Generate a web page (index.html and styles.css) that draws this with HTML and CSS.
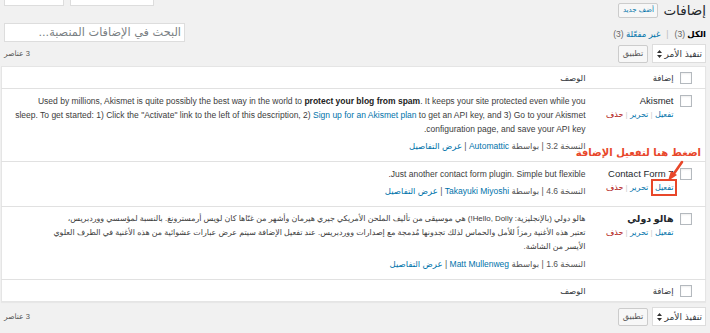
FILE: index.html
```html
<!DOCTYPE html>
<html lang="ar" dir="rtl">
<head>
<meta charset="utf-8">
<title>إضافات</title>
<link rel="stylesheet" href="styles.css">
</head>
<body>
<div class="wrap">
  <div class="head">
    <div class="title-group">
      <h1 class="page-title">إضافات</h1>
      <a class="add-new">أضف جديد</a>
    </div>
    <div class="screen-tabs">
      <span class="tab tab-a"></span>
      <span class="tab tab-b"></span>
    </div>
  </div>

  <div class="filter-row">
    <ul class="subsubsub">
      <li><b class="current">الكل</b> <span class="count">(3)</span></li>
      <li class="sep">|</li>
      <li><a>غير مفعّلة</a> <span class="count">(3)</span></li>
    </ul>
    <div class="search-box">البحث في الإضافات المنصبة...</div>
  </div>

  <div class="tablenav">
    <div class="bulk">
      <div class="select">
        <span>تنفيذ الأمر</span>
        <svg class="arrows" width="5" height="8" viewBox="0 0 5 8"><path d="M2.5 0L5 3H0z M2.5 8L0 5h5z" fill="#333"/></svg>
      </div>
      <span class="button">تطبيق</span>
    </div>
    <span class="num">3 عناصر</span>
  </div>

  <table class="plugins">
    <thead>
      <tr>
        <th class="check"><span class="cb"></span></th>
        <th class="col-name">إضافة</th>
        <th class="col-desc">الوصف</th>
      </tr>
    </thead>
    <tbody>
      <tr>
        <td class="check"><span class="cb"></span></td>
        <td class="col-name">
          <div class="plugin-title">Akismet</div>
          <div class="actions"><a>تفعيل</a> <span class="sep">|</span> <a>تحرير</a> <span class="sep">|</span> <a class="delete">حذف</a></div>
        </td>
        <td class="col-desc">
          <p class="desc">Used by millions, Akismet is quite possibly the best way in the world to <strong>protect your blog from spam</strong>. It keeps your site protected even while you<br>sleep. To get started: 1) Click the "Activate" link to the left of this description, 2) <a>Sign up for an Akismet plan</a> to get an API key, and 3) Go to your Akismet<br>configuration page, and save your API key.</p>
          <p class="meta">النسخة 3.2 | بواسطة <a>Automattic</a> | <a>عرض التفاصيل</a></p>
        </td>
      </tr>
      <tr>
        <td class="check"><span class="cb"></span></td>
        <td class="col-name">
          <div class="plugin-title">Contact Form 7</div>
          <div class="actions"><a>تفعيل</a> <span class="sep">|</span> <a>تحرير</a> <span class="sep">|</span> <a class="delete">حذف</a></div>
        </td>
        <td class="col-desc">
          <p class="desc">Just another contact form plugin. Simple but flexible.</p>
          <p class="meta">النسخة 4.6 | بواسطة <a>Takayuki Miyoshi</a> | <a>عرض التفاصيل</a></p>
        </td>
      </tr>
      <tr>
        <td class="check"><span class="cb"></span></td>
        <td class="col-name">
          <div class="plugin-title ar">هالو دولي</div>
          <div class="actions"><a>تفعيل</a> <span class="sep">|</span> <a>تحرير</a> <span class="sep">|</span> <a class="delete">حذف</a></div>
        </td>
        <td class="col-desc">
          <p class="desc ar">هالو دولي (بالإنجليزية: Hello, Dolly!) هي موسيقى من تأليف الملحن الأمريكي جيري هيرمان وأشهر من غنّاها كان لويس أرمسترونغ. بالنسبة لمؤسسي ووردبريس،<br>تعتبر هذه الأغنية رمزاً للأمل والحماس لذلك تجدونها مُدمجة مع إصدارات ووردبريس. عند تفعيل الإضافة سيتم عرض عبارات عشوائية من هذه الأغنية في الطرف العلوي<br>الأيسر من الشاشة.</p>
          <p class="meta">النسخة 1.6 | بواسطة <a>Matt Mullenweg</a> | <a>عرض التفاصيل</a></p>
        </td>
      </tr>
    </tbody>
    <tfoot>
      <tr>
        <th class="check"><span class="cb"></span></th>
        <th class="col-name">إضافة</th>
        <th class="col-desc">الوصف</th>
      </tr>
    </tfoot>
  </table>

  <div class="tablenav bottom">
    <div class="bulk">
      <div class="select">
        <span>تنفيذ الأمر</span>
        <svg class="arrows" width="5" height="8" viewBox="0 0 5 8"><path d="M2.5 0L5 3H0z M2.5 8L0 5h5z" fill="#333"/></svg>
      </div>
      <span class="button">تطبيق</span>
    </div>
    <span class="num">3 عناصر</span>
  </div>

  <div class="note">اضغط هنا لتفعيل الإضافة</div>
  <svg class="note-arrow" width="24" height="24" viewBox="0 0 24 24"><path d="M18 2 L9 15" stroke="#e8472a" stroke-width="2.6" fill="none" stroke-linecap="round"/><path d="M4 21 L7 11 L13 15 Z" fill="#e8472a"/></svg>
  <div class="note-box"></div>
</div>
</body>
</html>
```

FILE: styles.css
```css
* { box-sizing: border-box; }

html, body {
  margin: 0;
  padding: 0;
  background: #f1f1f1;
}

body {
  font-family: "Liberation Sans", "DejaVu Sans", sans-serif;
  font-size: 8.5px;
  color: #444;
}

a { color: #0073aa; text-decoration: none; }

.wrap {
  position: relative;
  padding: 0 4px 0 3px;
}

.head {
  display: flex;
  justify-content: space-between;
  align-items: flex-start;
  height: 21px;
}

.title-group {
  display: flex;
  align-items: center;
  gap: 5px;
  padding-top: 1px;
}

.page-title {
  margin: 0;
  font-size: 13.5px;
  line-height: 18px;
  font-weight: normal;
  color: #23282d;
  font-family: "DejaVu Sans", sans-serif;
}

.add-new {
  display: block;
  height: 15px;
  width: 40px;
  line-height: 13px;
  text-align: center;
  border: 1px solid #ccc;
  border-radius: 2px;
  background: #f7f7f7;
  font-size: 7px;
  font-family: "DejaVu Sans", sans-serif;
}

.screen-tabs {
  display: flex;
  direction: ltr;
  gap: 6px;
  padding-left: 1px;
}

.tab {
  display: block;
  height: 6px;
  background: #fff;
  border: 1px solid #ddd;
  border-top: none;
}
.tab-a { width: 60px; }
.tab-b { width: 84px; }

.filter-row {
  display: flex;
  justify-content: space-between;
  align-items: flex-end;
  height: 21px;
}

.subsubsub {
  display: flex;
  gap: 4px;
  margin: 0 0 2px;
  padding: 0;
  list-style: none;
  font-size: 8.5px;
  line-height: 12px;
  color: #666;
}
.subsubsub .current { color: #000; }
.subsubsub .sep { color: #bbb; padding: 0 2px; }

.search-box {
  width: 181px;
  height: 19px;
  margin-left: 1px;
  background: #fff;
  border: 1px solid #ddd;
  padding: 0 3px;
  font-size: 11.3px;
  line-height: 17px;
  color: #7a7f84;
  font-family: "DejaVu Sans", sans-serif;
  white-space: nowrap;
  overflow: hidden;
}

.tablenav {
  display: flex;
  justify-content: space-between;
  align-items: center;
  height: 24px;
  padding: 1px 0 2px;
}

.tablenav.bottom { padding-top: 4px; height: 27px; }

.bulk {
  display: flex;
  align-items: center;
  gap: 4px;
}

.select {
  display: flex;
  align-items: center;
  gap: 3px;
  width: 54px;
  height: 19px;
  padding: 0 3px;
  background: #fff;
  border: 1px solid #ddd;
  font-size: 9px;
  color: #32373c;
  font-family: "DejaVu Sans", sans-serif;
  white-space: nowrap;
}

.arrows { flex: none; }

.button {
  display: block;
  width: 30px;
  height: 18px;
  line-height: 16px;
  text-align: center;
  border: 1px solid #ccc;
  border-radius: 2px;
  background: #f7f7f7;
  font-size: 8px;
  color: #555;
  font-family: "DejaVu Sans", sans-serif;
}

.num {
  font-size: 7.5px;
  color: #555;
  padding-left: 1px;
}

.plugins {
  width: 705px;
  border-collapse: collapse;
  background: #fff;
  border: 1px solid #e5e5e5;
  box-shadow: 0 1px 1px rgba(0,0,0,.04);
}

.plugins th {
  height: 22px;
  font-weight: normal;
  text-align: right;
  font-size: 8.5px;
  color: #32373c;
  padding: 0;
}

.plugins thead tr { border-bottom: 1px solid #e1e1e1; }
.plugins tfoot tr { border-top: 1px solid #e1e1e1; }
.plugins tbody tr + tr { border-top: 1px solid #e1e1e1; }

.plugins td {
  vertical-align: top;
  padding: 5px 0 8px;
  line-height: 14px;
}

.check {
  width: 29px;
  padding-right: 13px !important;
}

.plugins td.check { padding-top: 6px; }

.cb {
  display: block;
  width: 12px;
  height: 12px;
  border: 1px solid #b4b9be;
  background: #fff;
  box-shadow: inset 0 1px 2px rgba(0,0,0,.07);
}

.col-name {
  width: 81px;
  padding-right: 3px !important;
}

.col-desc {
  padding-right: 10px !important;
  padding-left: 12px !important;
}

.plugin-title {
  font-size: 9.5px;
  color: #23282d;
  white-space: nowrap;
}
.plugin-title.ar { font-weight: bold; }

.actions {
  font-size: 8px;
  white-space: nowrap;
}
.actions .sep { color: #ccc; }
.actions .delete { color: #a00; }

.desc {
  margin: 0;
  color: #3c3c3c;
}
.desc.ar { font-size: 7.9px; }
.desc strong { color: #222; }

.meta {
  margin: 3px 0 0;
  color: #555;
}

.note {
  position: absolute;
  top: 145px;
  right: 9px;
  font-family: "DejaVu Sans", sans-serif;
  font-size: 10px;
  font-weight: bold;
  line-height: 15px;
  color: #e8472a;
  text-shadow: 0 0 1px #fff, 0 0 2px #fff, 1px 1px 0 #fff, -1px -1px 0 #fff;
  white-space: nowrap;
}

.note-arrow {
  position: absolute;
  top: 160px;
  left: 664px;
}

.note-box {
  position: absolute;
  top: 179px;
  left: 651px;
  width: 26px;
  height: 17px;
  border: 2px solid #e8472a;
}
```
